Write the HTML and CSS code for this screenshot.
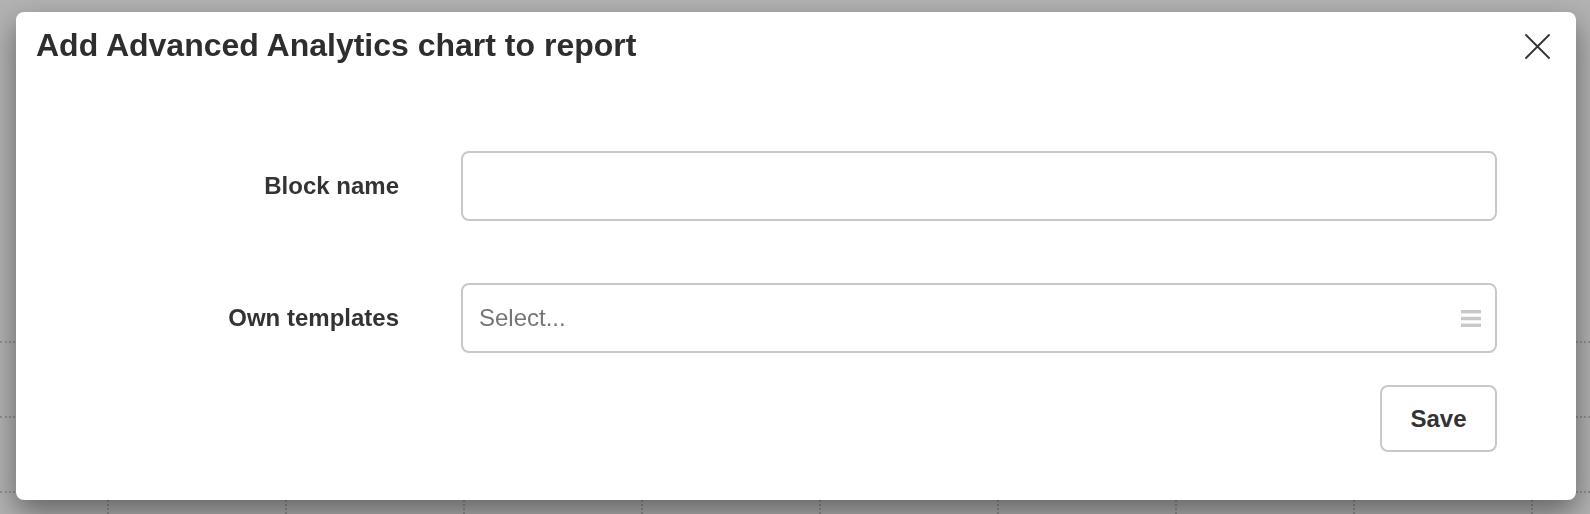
FILE: index.html
```html
<!DOCTYPE html>
<html lang="en">
<head>
<meta charset="utf-8">
<title>Add Advanced Analytics chart to report</title>
<link rel="stylesheet" href="styles.css">
</head>
<body>
<div class="page">
  <div class="cell first"></div><div class="cell"></div><div class="cell"></div><div class="cell"></div><div class="cell"></div><div class="cell"></div><div class="cell"></div><div class="cell"></div><div class="cell"></div><div class="cell"></div>
  <div class="cell first"></div><div class="cell"></div><div class="cell"></div><div class="cell"></div><div class="cell"></div><div class="cell"></div><div class="cell"></div><div class="cell"></div><div class="cell"></div><div class="cell"></div>
  <div class="cell first"></div><div class="cell"></div><div class="cell"></div><div class="cell"></div><div class="cell"></div><div class="cell"></div><div class="cell"></div><div class="cell"></div><div class="cell"></div><div class="cell"></div>
</div>
<div class="backdrop">
  <div class="modal">
    <div class="modal-header">
      <h4 class="modal-title">Add Advanced Analytics chart to report</h4>
      <button class="close" type="button" aria-label="Close">
        <svg width="25" height="25" viewBox="0 0 25 25"><path d="M1 1 L24 24 M24 1 L1 24" stroke="#333" stroke-width="1.8" fill="none" stroke-linecap="round"/></svg>
      </button>
    </div>
    <div class="modal-body">
      <div class="form-row">
        <label class="form-label">Block name</label>
        <input class="form-input" type="text">
      </div>
      <div class="form-row form-row-last">
        <label class="form-label">Own templates</label>
        <div class="select">
          <span class="placeholder">Select...</span>
          <svg class="select-icon" width="20" height="17" viewBox="0 0 20 17"><rect x="0" y="0" width="20" height="3.4" fill="#c8c8c8"/><rect x="0" y="6.8" width="20" height="3.4" fill="#c8c8c8"/><rect x="0" y="13.6" width="20" height="3.4" fill="#c8c8c8"/></svg>
        </div>
      </div>
      <div class="form-row actions">
        <span></span>
        <button class="btn-save" type="button">Save</button>
      </div>
    </div>
  </div>
</div>
</body>
</html>
```

FILE: styles.css
```css
html, body {
  margin: 0;
  padding: 0;
  width: 1590px;
  height: 514px;
  overflow: hidden;
  background: #ffffff;
  font-family: "Liberation Sans", Arial, sans-serif;
}

.page {
  box-sizing: border-box;
  display: grid;
  grid-template-columns: 107px repeat(8, 178px) 59px;
  grid-template-rows: 75px 75px 23px;
  height: 514px;
  padding-top: 341px;
}

.cell {
  border-top: 2px dotted #cfcfcf;
  border-left: 2px dotted #cfcfcf;
}

.cell.first {
  border-left: none;
}

.backdrop {
  position: fixed;
  inset: 0;
  background: rgba(0, 0, 0, 0.3);
}

.modal {
  box-sizing: border-box;
  margin: 12px 14px 0 16px;
  height: 488px;
  background: #ffffff;
  border-radius: 8px;
  box-shadow: 0 12px 30px rgba(0, 0, 0, 0.45);
}

.modal-header {
  display: flex;
  justify-content: space-between;
  align-items: flex-start;
  padding: 13px 26px 0 20px;
}

.modal-title {
  margin: 0;
  font-size: 32px;
  line-height: 40px;
  font-weight: 700;
  color: #2e2e2e;
}

.close {
  width: 25px;
  height: 25px;
  margin-top: 9px;
  padding: 0;
  border: none;
  background: none;
  display: block;
}

.close svg {
  display: block;
}

.modal-body {
  padding-top: 86px;
}

.form-row {
  display: grid;
  grid-template-columns: 383px 1036px;
  column-gap: 62px;
  align-items: center;
  margin-bottom: 62px;
}

.form-row-last {
  margin-bottom: 32px;
}

.form-label {
  text-align: right;
  font-size: 24px;
  font-weight: 700;
  color: #333333;
}

.form-input,
.select {
  box-sizing: border-box;
  height: 70px;
  border: 2px solid #c8c8c8;
  border-radius: 8px;
  background: #ffffff;
  font-family: inherit;
  font-size: 24px;
  margin: 0;
}

.form-input {
  width: 100%;
  padding: 0 16px;
}

.select {
  display: flex;
  align-items: center;
  justify-content: space-between;
  padding: 0 14px 0 16px;
}

.placeholder {
  color: #767676;
  font-size: 24px;
}

.select-icon {
  display: block;
}

.actions {
  margin-bottom: 0;
}

.btn-save {
  justify-self: end;
  box-sizing: border-box;
  width: 117px;
  height: 67px;
  border: 2px solid #c8c8c8;
  border-radius: 8px;
  background: #ffffff;
  font-family: inherit;
  font-size: 24px;
  font-weight: 700;
  color: #333333;
  padding: 0;
}
```
